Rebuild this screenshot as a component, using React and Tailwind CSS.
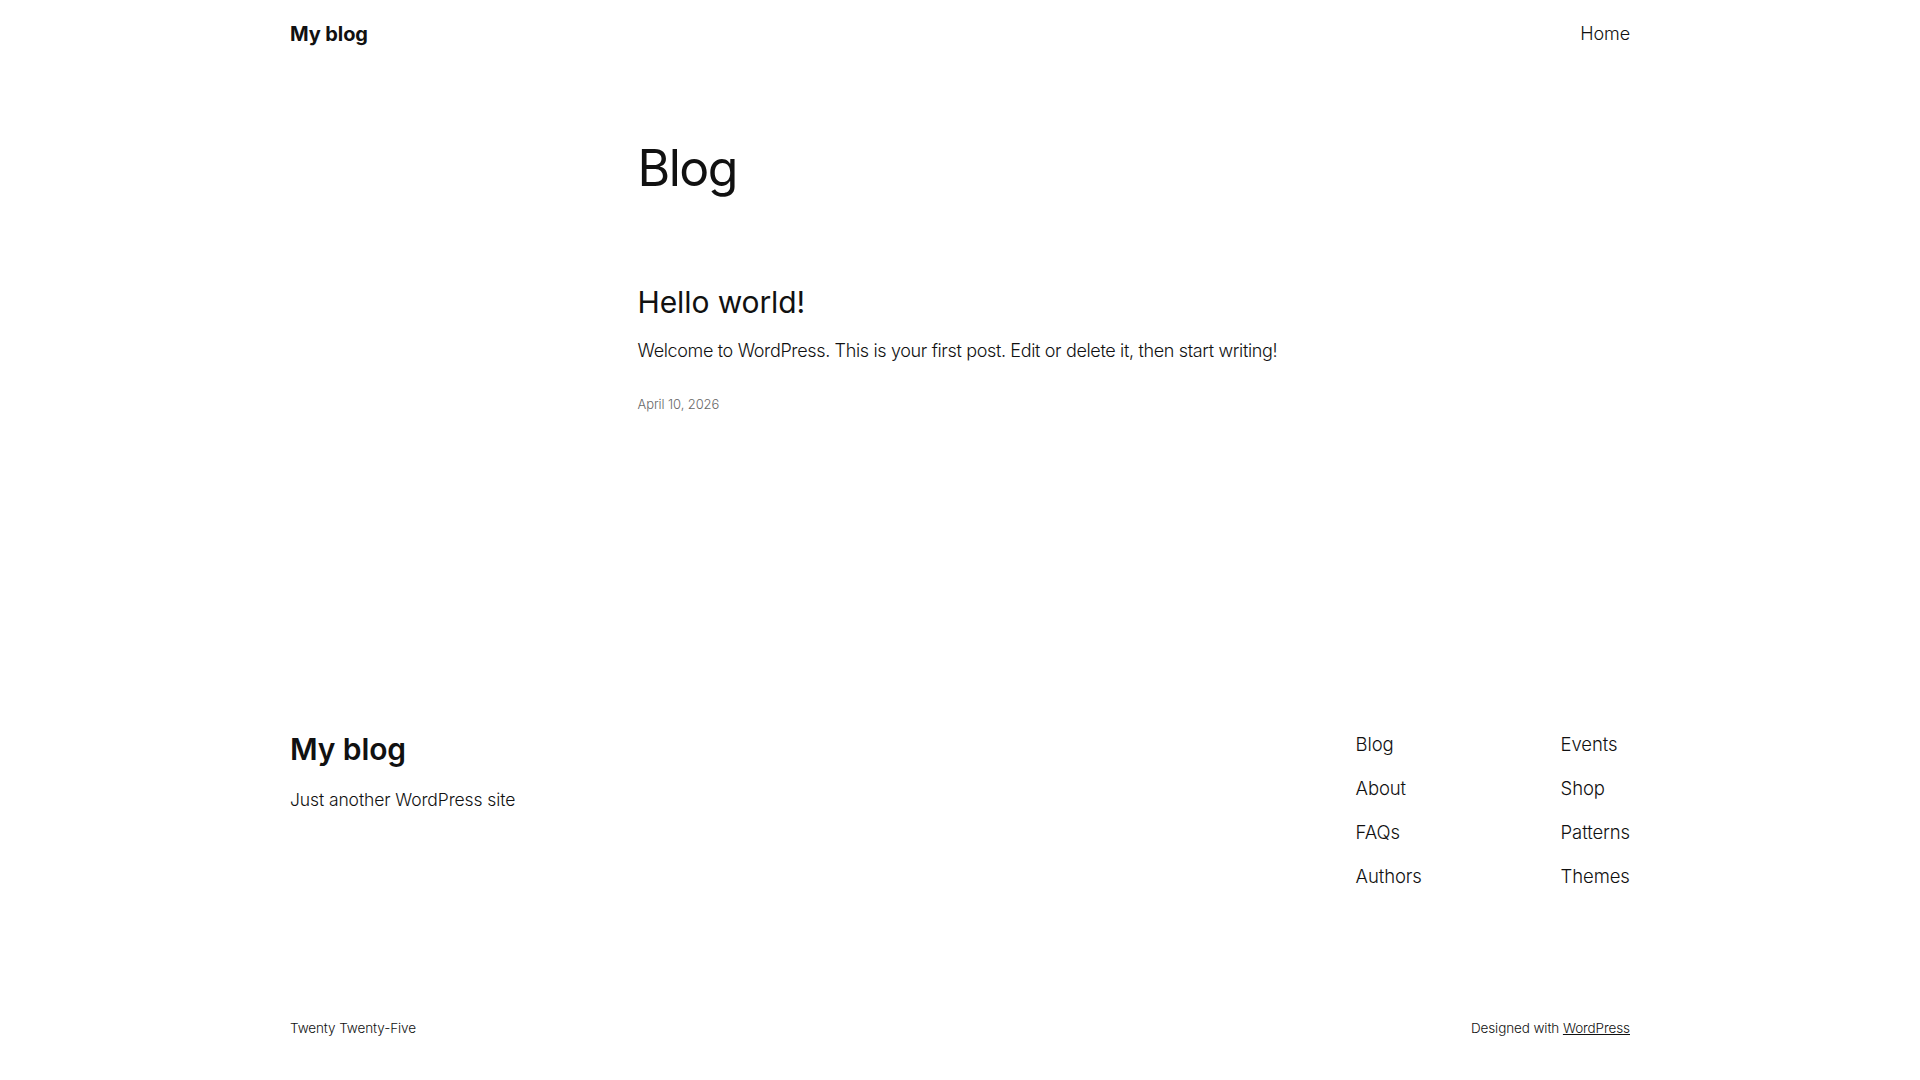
const primaryLinks = ["Blog", "About", "FAQs", "Authors"];
const secondaryLinks = ["Events", "Shop", "Patterns", "Themes"];

const App = () => {
    return (
        <div className="min-h-screen bg-white text-[#111111] font-['Inter','Liberation_Sans',sans-serif] tracking-[-0.1px]">
            {/* Header */}
            <header className="mx-auto flex h-[68px] w-[1340px] items-center justify-between">
                <a className="text-[20px] font-bold leading-[68px]">My blog</a>
                <nav>
                    <a className="text-[18px] font-light leading-[68px]">Home</a>
                </nav>
            </header>

            {/* Main */}
            <main className="mx-auto w-[645px] pt-[71px]">
                <h1 className="text-[50px] font-normal leading-[58px] tracking-[-1.5px]">
                    Blog
                </h1>
                <article className="mt-[87px]">
                    <h2 className="text-[30px] font-normal leading-[36px] tracking-[-0.1px]">
                        Hello world!
                    </h2>
                    <p className="mt-[16px] whitespace-nowrap text-[18px] font-light leading-[30px] tracking-[-0.35px]">
                        Welcome to WordPress. This is your first post. Edit or
                        delete it, then start writing!
                    </p>
                    <p className="mt-[28px] text-[13px] font-light leading-[20px] text-[#686868]">
                        April 10, 2026
                    </p>
                </article>
            </main>

            {/* Footer */}
            <footer className="mx-auto mt-[315px] w-[1340px] pb-[41px]">
                <div className="flex items-start justify-between">
                    <div>
                        <h2 className="text-[30px] font-semibold leading-[40px]">
                            My blog
                        </h2>
                        <p className="mt-[18px] text-[17.5px] font-light leading-[26px]">
                            Just another WordPress site
                        </p>
                    </div>
                    <div className="flex">
                        <ul className="flex w-[205px] flex-col gap-[14px]">
                            {primaryLinks.map((link) => (
                                <li key={link} className="text-[18.5px] font-light leading-[30px]">
                                    {link}
                                </li>
                            ))}
                        </ul>
                        <ul className="flex flex-col gap-[14px]">
                            {secondaryLinks.map((link) => (
                                <li key={link} className="text-[18.5px] font-light leading-[30px]">
                                    {link}
                                </li>
                            ))}
                        </ul>
                    </div>
                </div>
                <div className="mt-[127px] flex items-center justify-between text-[13.5px] font-light leading-[20px]">
                    <p>Twenty Twenty-Five</p>
                    <p>
                        Designed with <a className="underline">WordPress</a>
                    </p>
                </div>
            </footer>
        </div>
    );
};

export default App;
